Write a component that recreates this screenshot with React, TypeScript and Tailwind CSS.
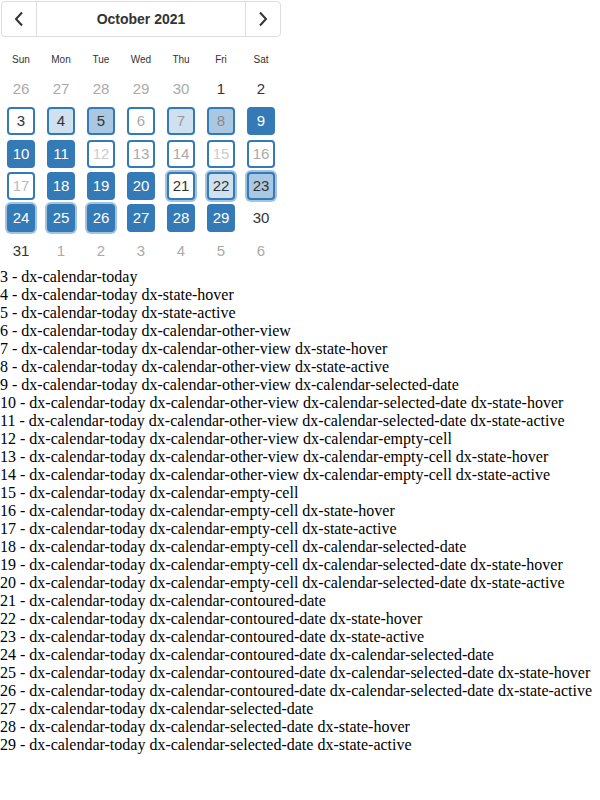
import React from "react";

type Cell = {
  n: number;
  kind: "plain" | "other" | "box";
  bg?: string;
  text?: string;
  glow?: boolean;
};

const HOVER = "bg-[#cfe0ef]";
const ACTIVE = "bg-[#abc8e2]";
const SEL = "bg-[#337ab7]";

function box(n: number, bg: string, text: string, glow = false): Cell {
  return { n, kind: "box", bg, text, glow };
}

const rows: Cell[][] = [
  [
    { n: 26, kind: "other" },
    { n: 27, kind: "other" },
    { n: 28, kind: "other" },
    { n: 29, kind: "other" },
    { n: 30, kind: "other" },
    { n: 1, kind: "plain" },
    { n: 2, kind: "plain" },
  ],
  [
    box(3, "bg-white", "text-[#333]"),
    box(4, HOVER, "text-[#333]"),
    box(5, ACTIVE, "text-[#333]"),
    box(6, "bg-white", "text-[#aaa]"),
    box(7, HOVER, "text-[#999]"),
    box(8, ACTIVE, "text-[#8a8a8a]"),
    box(9, SEL, "text-white"),
  ],
  [
    box(10, SEL, "text-white"),
    box(11, SEL, "text-white"),
    box(12, "bg-white", "text-[#ccc]"),
    box(13, "bg-white", "text-[#aaa]"),
    box(14, "bg-white", "text-[#aaa]"),
    box(15, "bg-white", "text-[#ccc]"),
    box(16, "bg-white", "text-[#aaa]"),
  ],
  [
    box(17, "bg-white", "text-[#bbb]"),
    box(18, SEL, "text-white"),
    box(19, SEL, "text-white"),
    box(20, SEL, "text-white"),
    box(21, "bg-white", "text-[#333]", true),
    box(22, HOVER, "text-[#333]", true),
    box(23, ACTIVE, "text-[#333]", true),
  ],
  [
    box(24, SEL, "text-white", true),
    box(25, SEL, "text-white", true),
    box(26, SEL, "text-white", true),
    box(27, SEL, "text-white"),
    box(28, SEL, "text-white"),
    box(29, SEL, "text-white"),
    { n: 30, kind: "plain" },
  ],
  [
    { n: 31, kind: "plain" },
    { n: 1, kind: "other" },
    { n: 2, kind: "other" },
    { n: 3, kind: "other" },
    { n: 4, kind: "other" },
    { n: 5, kind: "other" },
    { n: 6, kind: "other" },
  ],
];

const days = ["Sun", "Mon", "Tue", "Wed", "Thu", "Fri", "Sat"];

const lines = [
  "3 - dx-calendar-today",
  "4 - dx-calendar-today dx-state-hover",
  "5 - dx-calendar-today dx-state-active",
  "6 - dx-calendar-today dx-calendar-other-view",
  "7 - dx-calendar-today dx-calendar-other-view dx-state-hover",
  "8 - dx-calendar-today dx-calendar-other-view dx-state-active",
  "9 - dx-calendar-today dx-calendar-other-view dx-calendar-selected-date",
  "10 - dx-calendar-today dx-calendar-other-view dx-calendar-selected-date dx-state-hover",
  "11 - dx-calendar-today dx-calendar-other-view dx-calendar-selected-date dx-state-active",
  "12 - dx-calendar-today dx-calendar-other-view dx-calendar-empty-cell",
  "13 - dx-calendar-today dx-calendar-other-view dx-calendar-empty-cell dx-state-hover",
  "14 - dx-calendar-today dx-calendar-other-view dx-calendar-empty-cell dx-state-active",
  "15 - dx-calendar-today dx-calendar-empty-cell",
  "16 - dx-calendar-today dx-calendar-empty-cell dx-state-hover",
  "17 - dx-calendar-today dx-calendar-empty-cell dx-state-active",
  "18 - dx-calendar-today dx-calendar-empty-cell dx-calendar-selected-date",
  "19 - dx-calendar-today dx-calendar-empty-cell dx-calendar-selected-date dx-state-hover",
  "20 - dx-calendar-today dx-calendar-empty-cell dx-calendar-selected-date dx-state-active",
  "21 - dx-calendar-today dx-calendar-contoured-date",
  "22 - dx-calendar-today dx-calendar-contoured-date dx-state-hover",
  "23 - dx-calendar-today dx-calendar-contoured-date dx-state-active",
  "24 - dx-calendar-today dx-calendar-contoured-date dx-calendar-selected-date",
  "25 - dx-calendar-today dx-calendar-contoured-date dx-calendar-selected-date dx-state-hover",
  "26 - dx-calendar-today dx-calendar-contoured-date dx-calendar-selected-date dx-state-active",
  "27 - dx-calendar-today dx-calendar-selected-date",
  "28 - dx-calendar-today dx-calendar-selected-date dx-state-hover",
  "29 - dx-calendar-today dx-calendar-selected-date dx-state-active",
];

function DayCell({ c }: { c: Cell }) {
  if (c.kind !== "box") {
    return (
      <div
        className={
          "flex items-center justify-center " +
          (c.kind === "other" ? "text-[#aaa]" : "text-[#333]")
        }
      >
        {c.n}
      </div>
    );
  }
  return (
    <div className="flex items-center justify-center">
      <div
        className={
          "flex h-[28px] w-[28px] items-center justify-center rounded-[4px] border-2 border-[#337ab7] " +
          c.bg +
          " " +
          c.text +
          (c.glow ? " shadow-[0_0_0_2px_rgba(51,122,183,0.45)]" : "")
        }
      >
        {c.n}
      </div>
    </div>
  );
}

export default function App() {
  return (
    <div className="min-h-[800px] bg-white">
      {/* calendar widget */}
      <div className="ml-[1px] pt-[1px] w-[280px] font-['Liberation_Sans',Arial,sans-serif] text-[#333]">
        <div className="flex h-[36px] rounded-[4px] border border-[#ddd]">
          <button className="flex w-[35px] items-center justify-center border-r border-[#ddd]">
            <svg width="10" height="16" viewBox="0 0 10 16" fill="none">
              <path d="M8 1.5 2 8l6 6.5" stroke="#333" strokeWidth="2" />
            </svg>
          </button>
          <div className="flex flex-1 items-center justify-center text-[14px] font-bold">
            October 2021
          </div>
          <button className="flex w-[35px] items-center justify-center border-l border-[#ddd]">
            <svg width="10" height="16" viewBox="0 0 10 16" fill="none">
              <path d="M2 1.5 8 8l-6 6.5" stroke="#333" strokeWidth="2" />
            </svg>
          </button>
        </div>

        <div className="mt-[8px] grid h-[28px] grid-cols-7 text-[10px]">
          {days.map((d) => (
            <div key={d} className="flex items-center justify-center">
              {d}
            </div>
          ))}
        </div>

        <div className="grid h-[194px] grid-cols-7 grid-rows-6 text-[15px]">
          {rows.flat().map((c, i) => (
            <DayCell key={i} c={c} />
          ))}
        </div>
      </div>

      {/* state list */}
      <div className="mt-[1px] font-['Liberation_Serif','Times_New_Roman',serif] text-[16px] leading-[18px] text-black">
        {lines.map((l) => (
          <div key={l}>{l}</div>
        ))}
      </div>
    </div>
  );
}
